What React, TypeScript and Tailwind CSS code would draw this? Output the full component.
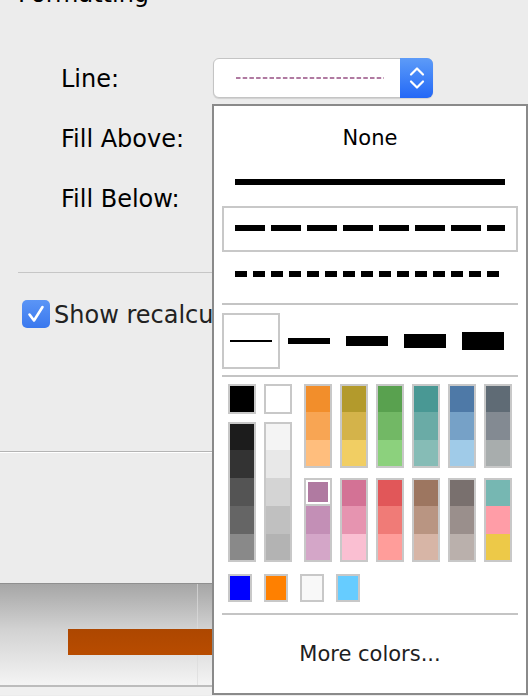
import React from "react";

const FONT = "font-['DejaVu_Sans',Verdana,sans-serif]";

function Column({ colors, heights }: { colors: string[]; heights: number[] }) {
  return (
    <div className="flex w-[28px] flex-col border-2 border-[#c8c8c8]">
      {colors.map((c, i) => (
        <div key={i} style={{ backgroundColor: c, height: heights[i] }} />
      ))}
    </div>
  );
}

const H3 = [26, 28, 26];
const H5 = [26, 28, 28, 28, 26];

const topCols = [
  ["#f28e2b", "#f8a553", "#ffbe7d"],
  ["#b39a2c", "#d4b34a", "#f1ce63"],
  ["#59a14f", "#72b865", "#8cd17d"],
  ["#499894", "#6aaba6", "#86bcb6"],
  ["#4e79a7", "#76a1c7", "#a0cbe8"],
  ["#5f6b75", "#838a92", "#a8adad"],
];

const bottomCols = [
  ["#b07aa1", "#c38fb6", "#d4a6c8"],
  ["#d37295", "#e694b0", "#fabfd2"],
  ["#e15759", "#f07b77", "#ff9d9a"],
  ["#9d7660", "#b99582", "#d7b5a6"],
  ["#79706e", "#9a8f8c", "#bab0ac"],
  ["#76b7b2", "#ff9da7", "#edc948"],
];

function SelectedColumn() {
  return (
    <div className="flex w-[28px] flex-col border-2 border-[#c8c8c8]">
      <div className="h-[26px] bg-[#c8c8c8]">
        <div className="h-[24px] bg-white p-[2px]">
          <div className="h-full w-full bg-[#b07aa1]" />
        </div>
      </div>
      <div className="h-[28px] bg-[#c38fb6]" />
      <div className="h-[26px] bg-[#d4a6c8]" />
    </div>
  );
}

function LineSelect() {
  return (
    <div className="flex h-[40px] w-[220px] rounded-[6px] border border-[#c4c4c4] bg-white shadow-[0_1px_1px_rgba(0,0,0,0.12)]">
      <div className="flex flex-1 items-center pl-[22px]">
        <svg width="150" height="4" className="block">
          <line x1="0" y1="2" x2="148" y2="2" stroke="#b07aa1" strokeWidth="1.8" strokeDasharray="4.5 2.2" />
        </svg>
      </div>
      <div className="-my-px -mr-px flex w-[33px] items-center justify-center rounded-r-[6px] bg-gradient-to-b from-[#5d9bf8] to-[#2367f6]">
        <svg width="16" height="24" viewBox="0 0 16 24" fill="none">
          <path d="M2 8.5 L8 2.5 L14 8.5" stroke="white" strokeWidth="2.2" strokeLinecap="round" strokeLinejoin="round" />
          <path d="M2 15.5 L8 21.5 L14 15.5" stroke="white" strokeWidth="2.2" strokeLinecap="round" strokeLinejoin="round" />
        </svg>
      </div>
    </div>
  );
}

function Popup() {
  const widths = [2, 6, 10, 14, 18];
  return (
    <div className={`absolute left-[212px] top-[104px] h-[591px] w-[316px] border-2 border-[#8a8a8a] bg-white px-[8px] pt-[8px] ${FONT}`}>
      <div className="flex h-[46px] items-center justify-center pt-[4px] text-[21px] text-black">None</div>
      <div className="h-[46px] pl-[13px] pt-[19px]">
        <div className="h-[6px] w-[270px] bg-black" />
      </div>
      <div className="h-[46px] border-2 border-[#c8c8c8] pl-[11px] pt-[17px]">
        <svg width="270" height="6" className="block">
          <line x1="0" y1="3" x2="270" y2="3" stroke="black" strokeWidth="6" strokeDasharray="30 6" />
        </svg>
      </div>
      <div className="h-[51px] pl-[13px] pt-[19px]">
        <svg width="264" height="6" className="block">
          <line x1="0" y1="3" x2="264" y2="3" stroke="black" strokeWidth="6" strokeDasharray="12 6" />
        </svg>
      </div>
      <div className="h-[2px] bg-[#c4c4c4]" />
      <div className="mt-[8px] flex h-[56px]">
        {widths.map((w, i) => (
          <div
            key={i}
            className={`flex h-[56px] w-[58px] items-center justify-center ${i === 0 ? "border-2 border-[#c8c8c8]" : ""}`}
          >
            <div className="w-[42px] bg-black" style={{ height: w }} />
          </div>
        ))}
      </div>
      <div className="mt-[6px] h-[2px] bg-[#c4c4c4]" />
      <div className="mt-[7px] flex pl-[6px]">
        <div className="flex gap-[8px]">
          <div className="flex flex-col gap-[8px]">
            <div className="h-[30px] w-[28px] border-2 border-[#c8c8c8] bg-black" />
            <Column colors={["#1c1c1c", "#333333", "#545454", "#656565", "#898989"]} heights={H5} />
          </div>
          <div className="flex flex-col gap-[8px]">
            <div className="h-[30px] w-[28px] border-2 border-[#c8c8c8] bg-white" />
            <Column colors={["#f4f4f4", "#e8e8e8", "#d4d4d4", "#c0c0c0", "#b3b3b3"]} heights={H5} />
          </div>
        </div>
        <div className="ml-[12px] flex flex-col gap-[10px]">
          <div className="flex gap-[8px]">
            {topCols.map((c, i) => (
              <Column key={i} colors={c} heights={H3} />
            ))}
          </div>
          <div className="flex gap-[8px]">
            <SelectedColumn />
            {bottomCols.slice(1).map((c, i) => (
              <Column key={i} colors={c} heights={H3} />
            ))}
          </div>
        </div>
      </div>
      <div className="mt-[12px] flex gap-[12px] pl-[6px]">
        {["#0000ff", "#ff8000", "#f8f8f8", "#66ccff"].map((c) => (
          <div key={c} className="h-[28px] w-[24px] border-2 border-[#c8c8c8]" style={{ backgroundColor: c }} />
        ))}
      </div>
      <div className="mt-[11px] h-[2px] bg-[#c4c4c4]" />
      <div className="flex h-[76px] items-center justify-center pt-[3px] text-[21px] text-[#1e1e1e]">More colors...</div>
    </div>
  );
}

export default function App() {
  return (
    <div className={`relative h-[696px] w-[528px] overflow-hidden bg-[#ececec] ${FONT}`}>
      <div className="flex h-[584px] flex-col border-b border-[#8f8f8f]">
        <div className="-mt-[20px] ml-[18px] text-[24px] leading-[28px] text-black">Formatting</div>
        <div className="mt-[40px] flex flex-col">
          <div className="flex h-[60px] items-center pl-[61px] pt-[2px]">
            <div className="w-[152px] text-[24px] text-black">Line:</div>
            <div className="-mt-[2px]">
              <LineSelect />
            </div>
          </div>
          <div className="flex h-[60px] items-center pl-[61px] pt-[2px]">
            <div className="w-[152px] text-[24px] text-black">Fill Above:</div>
          </div>
          <div className="flex h-[60px] items-center pl-[61px] pt-[2px]">
            <div className="w-[152px] text-[24px] text-black">Fill Below:</div>
          </div>
        </div>
        <div className="ml-[18px] mt-[44px] h-px bg-[#c6c6c6]" />
        <div className="mt-[27px] flex h-[28px] items-center pl-[22px]">
          <div className="flex h-[28px] w-[28px] items-center justify-center rounded-[5px] bg-gradient-to-b from-[#5b95f6] to-[#3a78ee]">
            <svg width="28" height="28" viewBox="0 0 28 28" fill="none">
              <path d="M7.5 14.5 L12 20.5 L20.5 7" stroke="white" strokeWidth="2.6" strokeLinecap="round" strokeLinejoin="round" />
            </svg>
          </div>
          <div className="ml-[4px] whitespace-nowrap pt-[2px] text-[24px] text-[#222]">Show recalculated values</div>
        </div>
        <div className="mt-[123px] h-px bg-[#b4b4b4]" />
        <div className="h-px bg-white" />
      </div>
      <div className="relative h-[111px]">
        <div className="h-[101px] bg-gradient-to-b from-[#a6a6a6] via-[#d2d2d2] via-45% to-[#f4f4f4] pt-[45px]">
          <div className="absolute left-[197px] top-0 h-[101px] w-px bg-[#dcdcdc]/70" />
          <div className="relative ml-[68px] h-[26px] w-[300px] bg-gradient-to-b from-[#ad4700] to-[#b84c00]" />
        </div>
        <div className="h-[2px] bg-[#bcbcbc]" />
        <div className="h-[8px] bg-[#f0f0f0]" />
      </div>
      <Popup />
    </div>
  );
}
